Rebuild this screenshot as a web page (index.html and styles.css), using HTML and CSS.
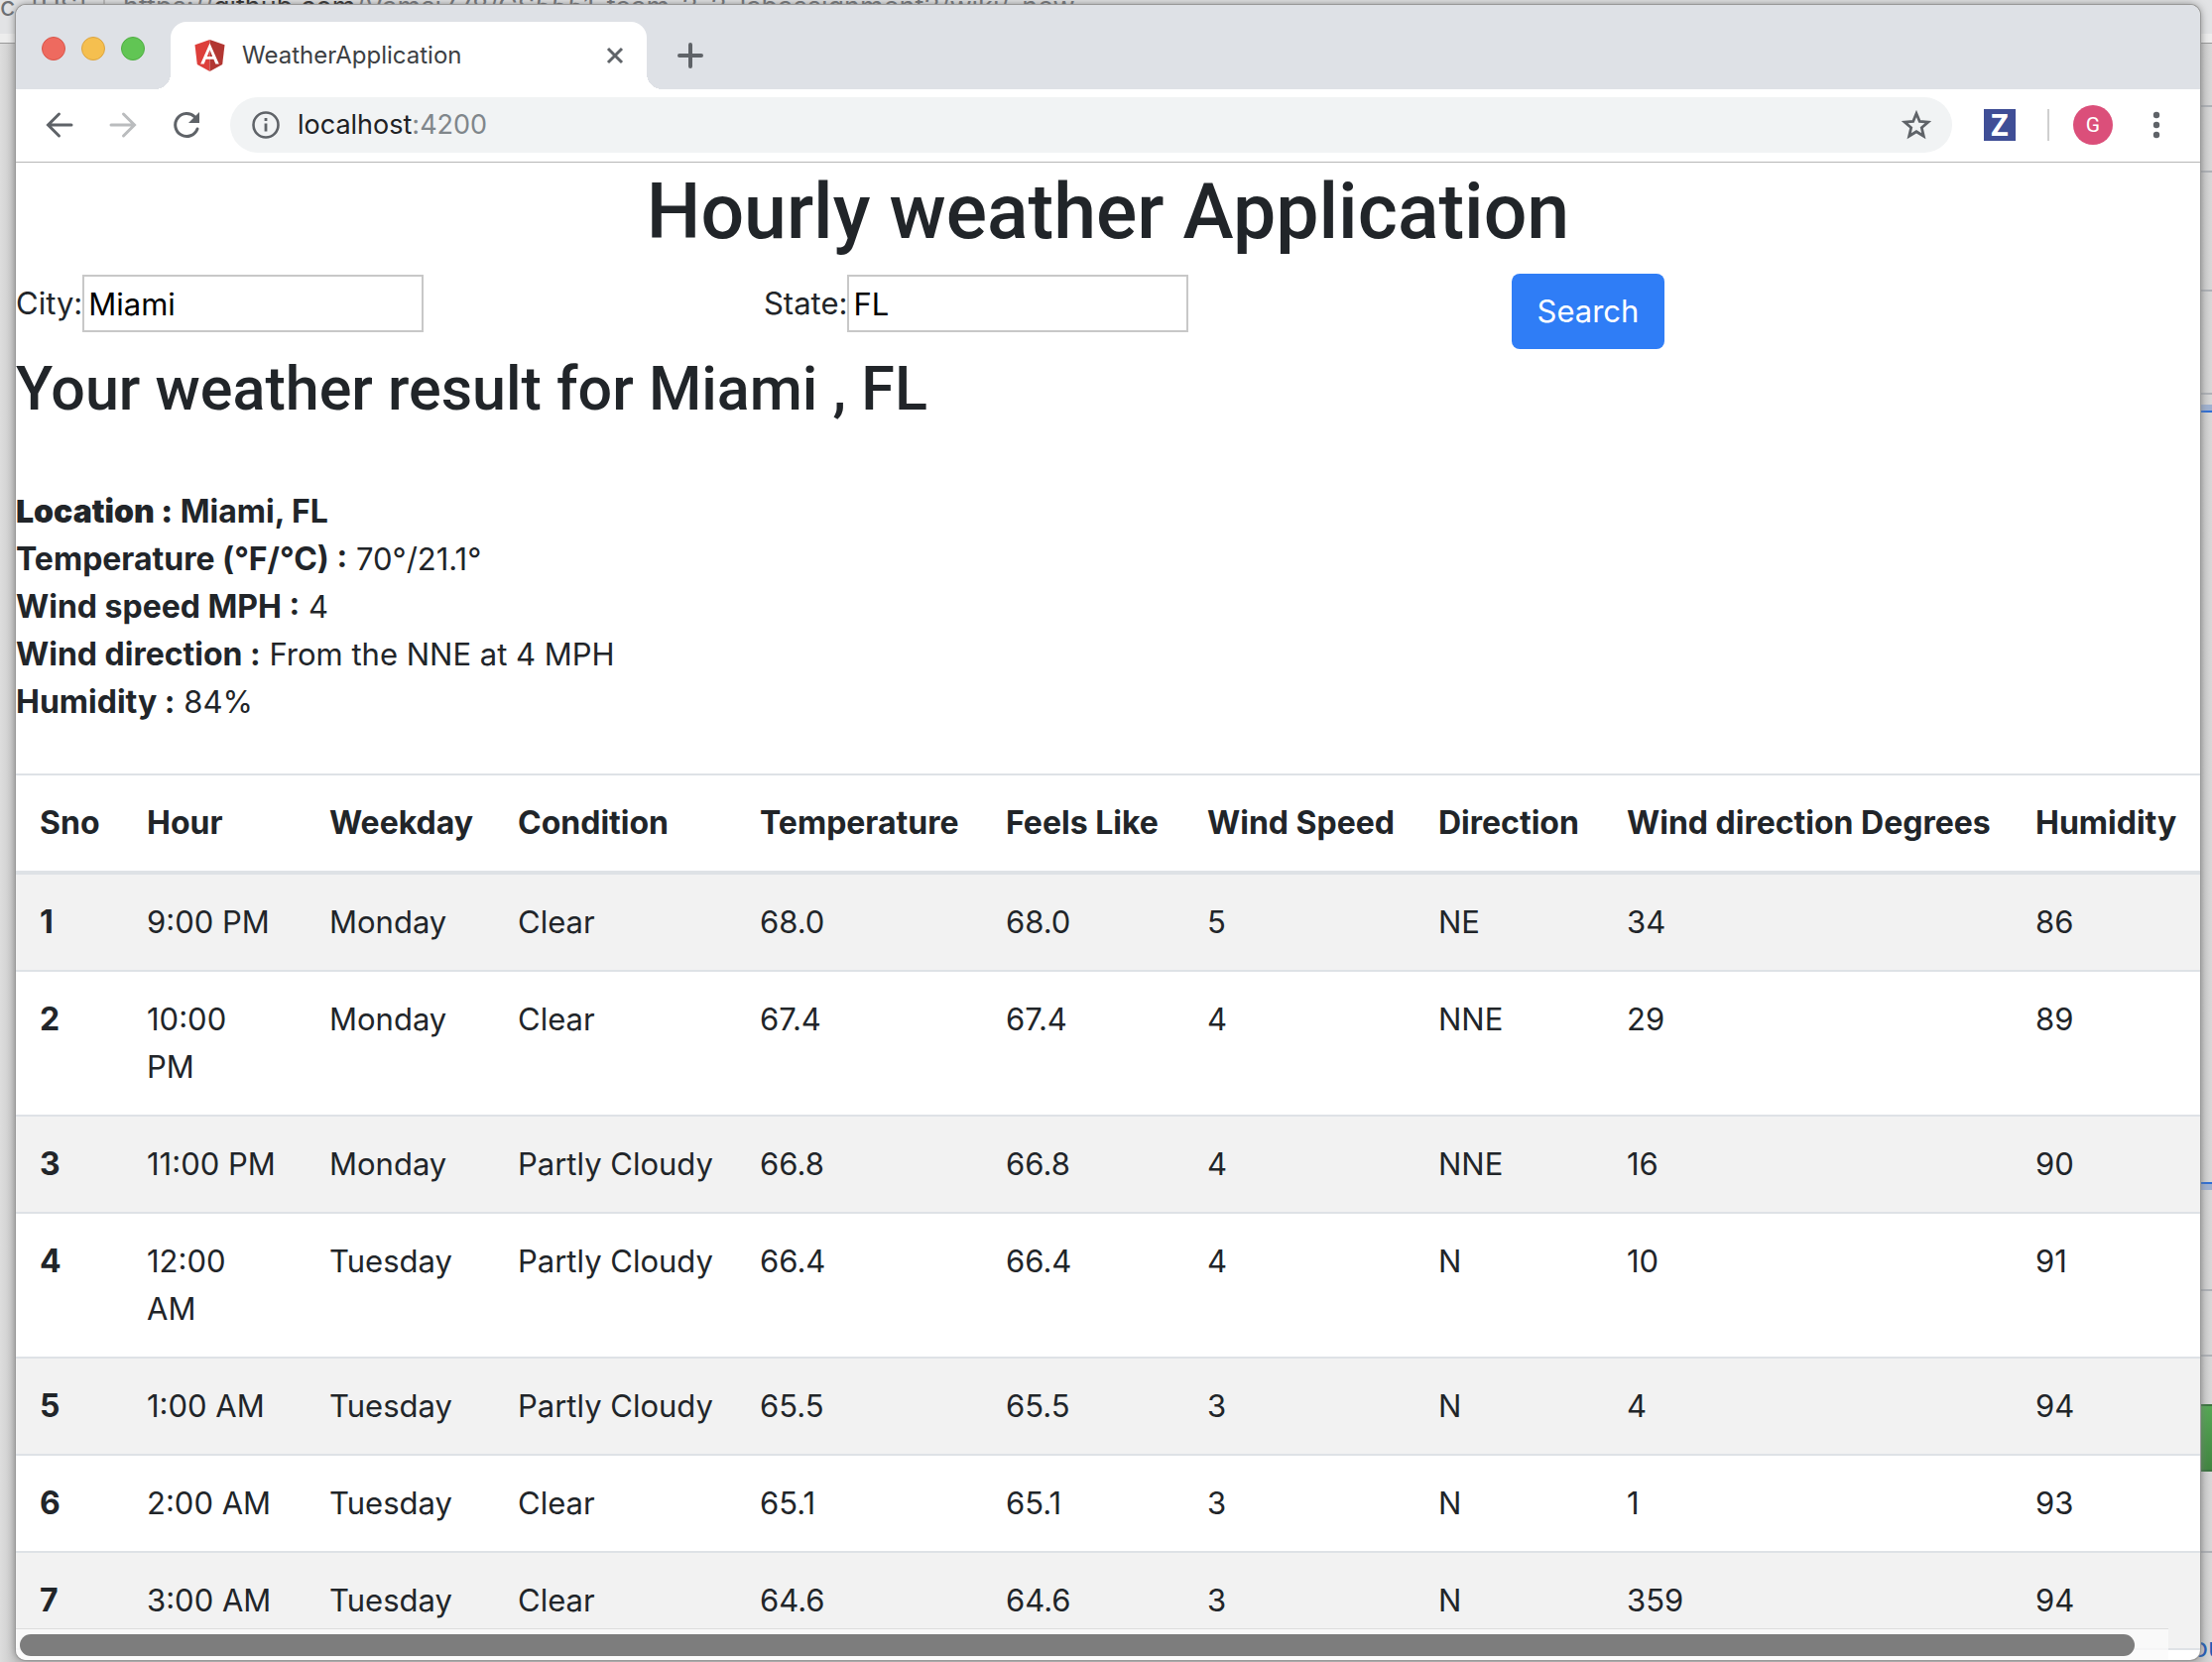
FILE: index.html
```html
<!DOCTYPE html>
<html lang="en">
<head>
<meta charset="utf-8">
<title>WeatherApplication</title>
<link rel="stylesheet" href="styles.css">
</head>
<body>
<div class="desktop">
  <div class="backdrop" aria-hidden="true">
    <div class="back-bar"><span class="back-site">c. [US]</span><span class="back-sep"></span><span class="back-url">https://<b>github.com</b>/Vamsi778/CS5551_team_2_2_labassignment2/wiki/_new</span></div>
    <div class="back-page"></div>
    <i class="back-line l1"></i><i class="back-line l2"></i><i class="back-line l3"></i><i class="back-line l4"></i>
    <i class="back-line l5"></i><i class="back-line l6"></i><i class="back-line l7"></i>
    <i class="back-focus top"></i><i class="back-focus bottom"></i>
    <i class="back-save"></i>
    <span class="back-link">ou</span>
  </div>

  <div class="window">
    <header class="tabstrip">
      <div class="lights"><i class="light red"></i><i class="light yellow"></i><i class="light green"></i></div>
      <div class="tab">
        <svg class="favicon" viewBox="0 0 30 32"><path fill="#dd3f3b" d="M15 0 0 5.300 2.300 25 15 32z"/><path fill="#b23632" d="M15 0l15 5.300L27.700 25 15 32z"/><path fill="#fff" fill-rule="evenodd" d="M15 3.600 5.700 24.500h3.500l1.900-4.700h7.800l1.900 4.700h3.500zM15 10.200l2.700 6.700h-5.400z"/></svg>
        <span class="tab-title">WeatherApplication</span>
        <button class="icon-button tab-close" aria-label="Close tab"><svg width="18" height="18" viewBox="0 0 18 18"><path d="M2 2l14 14M16 2 2 16" stroke="#5f6368" stroke-width="3" fill="none"/></svg></button>
      </div>
      <button class="icon-button new-tab" aria-label="New tab"><svg width="26" height="26" viewBox="0 0 26 26"><path d="M13 2v22M2 13h22" stroke="#5f6368" stroke-width="4" stroke-linecap="round"/></svg></button>
    </header>

    <nav class="toolbar">
      <div class="tools">
        <button class="icon-button" aria-label="Back"><svg width="32" height="32" viewBox="0 0 32 32"><path d="M28 16H5M15.500 5 4.500 16l11 11" fill="none" stroke="#5f6368" stroke-width="3" stroke-linecap="round"/></svg></button>
        <button class="icon-button" aria-label="Forward"><svg width="32" height="32" viewBox="0 0 32 32"><path d="M4 16h23M16.500 5l11 11-11 11" fill="none" stroke="#babcbe" stroke-width="3" stroke-linecap="round"/></svg></button>
        <button class="icon-button" aria-label="Reload"><svg width="32" height="32" viewBox="0 0 32 32"><path d="M27 20a11.500 11.500 0 1 1-2.500-12" fill="none" stroke="#5f6368" stroke-width="3" stroke-linecap="round"/><path d="M29 3v11H18z" fill="#5f6368"/></svg></button>
      </div>
      <div class="omnibox">
        <svg width="28" height="28" viewBox="0 0 28 28"><circle cx="14" cy="14" r="12.500" fill="none" stroke="#5f6368" stroke-width="2.600"/><path d="M14 12.500v8M14 7v3" stroke="#5f6368" stroke-width="2.800"/></svg>
        <span class="address">localhost<span class="port">:4200</span></span>
        <button class="icon-button" aria-label="Bookmark"><svg width="30" height="30" viewBox="0 0 30 30"><path d="M15 3.500l3.300 8 8.500.700-6.500 5.600 2 8.400L15 21.700l-7.300 4.500 2-8.400-6.500-5.600 8.500-.7z" fill="none" stroke="#5f6368" stroke-width="2.800"/></svg></button>
      </div>
      <div class="tools">
        <button class="extension" aria-label="Extension">Z</button>
        <i class="divider"></i>
        <button class="avatar" aria-label="Profile">G</button>
        <button class="icon-button menu" aria-label="Menu"><svg width="8" height="28" viewBox="0 0 8 28"><g fill="#5f6368"><circle cx="4" cy="4" r="3.200"/><circle cx="4" cy="14" r="3.200"/><circle cx="4" cy="24" r="3.200"/></g></svg></button>
      </div>
    </nav>

    <main class="page">
      <h1>Hourly weather Application</h1>
      <form class="search">
        <div><label for="city">City:</label><input id="city" type="text" value="Miami"></div>
        <div><label for="state">State:</label><input id="state" type="text" value="FL"></div>
        <div><button class="submit" type="button">Search</button></div>
      </form>
      <h2>Your weather result for Miami , FL</h2>
      <div class="summary">
        <p><b><strong>Location :</strong> Miami, FL</b></p>
        <p><b>Temperature (°F/°C) :</b> 70°/21.1°</p>
        <p><b>Wind speed MPH :</b> 4</p>
        <p><b>Wind direction :</b> From the NNE at 4 MPH</p>
        <p><b>Humidity :</b> 84%</p>
      </div>
      <table>
        <colgroup><col class="c-sno"><col class="c-hour"><col class="c-day"><col class="c-cond"><col class="c-temp"><col class="c-feels"><col class="c-speed"><col class="c-dir"><col class="c-deg"><col class="c-hum"></colgroup>
        <thead><tr><th scope="col">Sno</th><th scope="col">Hour</th><th scope="col">Weekday</th><th scope="col">Condition</th><th scope="col">Temperature</th><th scope="col">Feels Like</th><th scope="col">Wind Speed</th><th scope="col">Direction</th><th scope="col">Wind direction Degrees</th><th scope="col">Humidity</th></tr></thead>
        <tbody>
          <tr><th scope="row">1</th><td>9:00 PM</td><td>Monday</td><td>Clear</td><td>68.0</td><td>68.0</td><td>5</td><td>NE</td><td>34</td><td>86</td></tr>
          <tr><th scope="row">2</th><td>10:00<br>PM</td><td>Monday</td><td>Clear</td><td>67.4</td><td>67.4</td><td>4</td><td>NNE</td><td>29</td><td>89</td></tr>
          <tr><th scope="row">3</th><td>11:00 PM</td><td>Monday</td><td>Partly Cloudy</td><td>66.8</td><td>66.8</td><td>4</td><td>NNE</td><td>16</td><td>90</td></tr>
          <tr><th scope="row">4</th><td>12:00<br>AM</td><td>Tuesday</td><td>Partly Cloudy</td><td>66.4</td><td>66.4</td><td>4</td><td>N</td><td>10</td><td>91</td></tr>
          <tr><th scope="row">5</th><td>1:00 AM</td><td>Tuesday</td><td>Partly Cloudy</td><td>65.5</td><td>65.5</td><td>3</td><td>N</td><td>4</td><td>94</td></tr>
          <tr><th scope="row">6</th><td>2:00 AM</td><td>Tuesday</td><td>Clear</td><td>65.1</td><td>65.1</td><td>3</td><td>N</td><td>1</td><td>93</td></tr>
          <tr class="last"><th scope="row">7</th><td>3:00 AM</td><td>Tuesday</td><td>Clear</td><td>64.6</td><td>64.6</td><td>3</td><td>N</td><td>359</td><td>94</td></tr>
        </tbody>
      </table>
    </main>
    <div class="scrollbar"><i class="thumb"></i></div>
  </div>
</div>
</body>
</html>
```
FILE: styles.css
```css
* { box-sizing: border-box; }
body {
  margin: 0;
  color: #212529;
  font: 400 31px/48px Inter, "Liberation Sans", sans-serif;
}
button { font: inherit; border: 0; padding: 0; background: none; }
svg { display: block; }

.desktop { position: relative; height: 100vh; overflow: hidden; padding: 5px 12px 2px 16px; background: #d4d4d5; }

/* Window behind */
.backdrop { position: absolute; inset: 0; overflow: hidden; }
.back-bar {
  display: flex; align-items: center; height: 43px;
  background: #e2e3e5; border-bottom: 9px solid #ededed;
  color: #6d7074; font-size: 27px; white-space: nowrap;
}
.back-bar b { color: #222; font-size: 27px; font-weight: 400; }
.back-site, .back-url { margin-top: -20px; }
.back-sep { width: 2px; height: 40px; margin: 0 18px 0 16px; background: #bbb; }
.back-page { height: 100%; border-top: 1px solid #999; background: linear-gradient(90deg, #ddd, #c8c8c8 16px, #c8c8c8 calc(100% - 12px), #d8d8d8); }
.back-line { position: absolute; right: 0; width: 12px; height: 2px; background: #aeb1b6; }
.l1 { top: 106px; } .l2 { top: 172px; } .l3 { top: 292px; } .l4 { top: 396px; }
.l5 { top: 1300px; } .l6 { top: 1366px; } .l7 { top: 1564px; }
.back-focus { position: absolute; right: 0; width: 12px; height: 8px; background: #9fb1d0; }
.back-focus.top { top: 408px; border-bottom: 2px solid #2f6fd6; }
.back-focus.bottom { top: 1192px; border-top: 2px solid #2f6fd6; }
.back-save { position: absolute; right: 0; top: 1416px; width: 12px; height: 68px; border: solid #3b7440; border-width: 2px 0; background: linear-gradient(#56a755, #418540); }
.back-link { position: absolute; right: -12px; bottom: -10px; color: #1f5bb5; font-size: 27px; }

/* Browser window */
.window {
  position: relative; display: flex; flex-direction: column; height: 100%; overflow: hidden;
  border-radius: 10px; background: #fff; box-shadow: 0 0 0 1px #999, 0 0 8px #777;
}
.tabstrip { display: flex; flex: none; height: 85px; background: #dee1e6; }
.lights { display: flex; gap: 16px; padding: 32px 26px 0; }
.light { width: 24px; height: 24px; border-radius: 50%; border: 1px solid; }
.red { background: #ee6a5f; border-color: #d95549; }
.yellow { background: #f5bf4f; border-color: #dca440; }
.green { background: #61c554; border-color: #4fae42; }
.tab {
  position: relative; display: flex; align-items: center; width: 480px; margin-top: 17px; padding: 0 23px 0 24px;
  border-radius: 16px 16px 0 0; background: #fff; color: #3c4043; font-size: 24px;
}
.tab::before, .tab::after { content: ""; position: absolute; bottom: 0; width: 16px; height: 16px; }
.tab::before { right: 100%; background: radial-gradient(circle at 0 0, #dee1e6 16px, #fff 16px); }
.tab::after { left: 100%; background: radial-gradient(circle at 100% 0, #dee1e6 16px, #fff 16px); }
.favicon { width: 31px; height: 32px; }
.tab-title { flex: 1; margin-left: 17px; }
.new-tab { margin: 17px 0 0 31px; }

.toolbar { display: flex; flex: none; align-items: center; gap: 28px; height: 74px; padding: 0 40px 1px 28px; border-bottom: 1px solid #b6b6b6; }
.tools { display: flex; align-items: center; gap: 32px; }
.omnibox { display: flex; flex: 1; align-items: center; height: 56px; margin-right: 4px; padding: 0 21px 0 22px; border-radius: 28px; background: #f1f3f4; }
.address { flex: 1; margin-left: 18px; color: #202124; font-size: 27px; }
.port { color: #80868b; }
.extension { width: 32px; height: 32px; background: #3f4e96; color: #fff; font: 700 30px/32px "Open Sans", sans-serif; }
.divider { width: 2px; height: 32px; margin-right: -8px; background: #cfcfcf; }
.avatar { width: 40px; height: 40px; border-radius: 50%; background: #db4f7a; color: #fff; font: 400 21px/40px Roboto, sans-serif; }
.menu { margin-left: 8px; }

/* Page */
.page { flex: 1; min-height: 0; overflow: hidden; }
h1, h2 { margin: 0 0 12px; font-family: Roboto, Inter, sans-serif; font-weight: 500; }
h1 { font-size: 77px; line-height: 100px; text-align: center; }
h2 { font-size: 61px; line-height: 80px; }
.search { display: grid; grid-template-columns: repeat(3, calc((100% + 60px) / 3)); height: 76px; }
.search div { display: flex; align-items: flex-start; }
.search label { line-height: 60px; }
.search input { width: 344px; height: 58px; margin-top: 1px; padding: 0 4px; border: 2px solid #c8c8c8; background: #fff; color: #000; font: inherit; }
.submit { width: 154px; height: 76px; border-radius: 8px; background: #2f7df6; color: #fff; }
.summary { padding: 48px 0; }
.summary p { margin: 0; height: 48px; }
b, th { font-size: 32px; font-weight: 700; }
strong { font-weight: 900; }
table { width: 100%; table-layout: fixed; border-collapse: collapse; }
th, td { padding: 24px 0 24px 24px; border-top: 2px solid #dee2e6; text-align: left; vertical-align: top; white-space: nowrap; }
thead th { border-bottom: 4px solid #dee2e6; }
tbody tr:nth-child(odd) { background: #f2f2f2; }
.last > * { border-bottom: 2px solid #dee2e6; }
.c-sno { width: 108px; } .c-hour { width: 184px; } .c-day { width: 190px; } .c-cond { width: 244px; } .c-temp { width: 248px; }
.c-feels { width: 203px; } .c-speed { width: 233px; } .c-dir { width: 190px; } .c-deg { width: 412px; } .c-hum { width: 190px; }

.scrollbar { position: absolute; left: 0; right: 32px; bottom: 0; height: 32px; padding: 5px 34px 4px 4px; border-top: 1px solid #ddd; background: #fafafacc; }
.thumb { display: block; height: 22px; border-radius: 11px; background: #7d7d7d; }
```
